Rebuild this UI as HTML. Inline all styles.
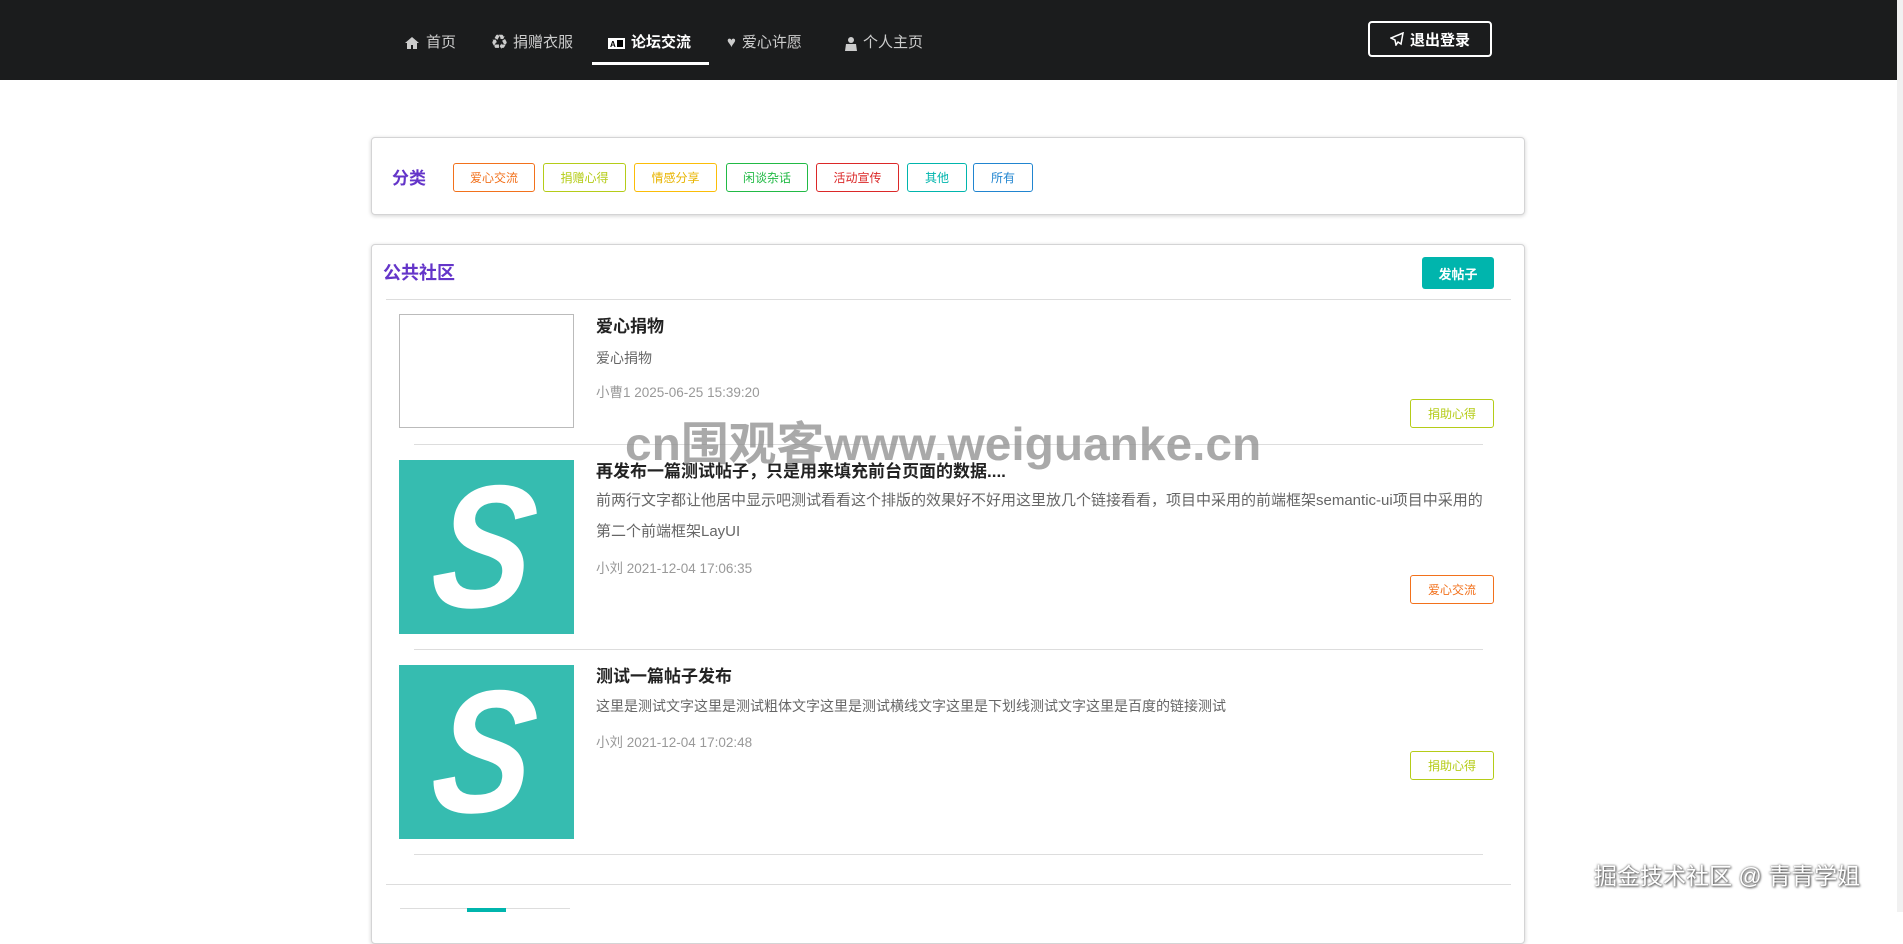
<!DOCTYPE html>
<html><head><meta charset="utf-8"><style>
*{box-sizing:border-box;margin:0;padding:0}
body{width:1903px;height:912px;overflow:hidden;background:#fff;font-family:"Liberation Sans","Noto Sans CJK SC",sans-serif;position:relative}
.hdr{position:absolute;left:0;top:0;width:1897px;height:80px;background:#1b1c1d}
.sb{position:absolute;right:0;top:0;width:6px;height:912px;background:#f1f1f1}
.nav{position:absolute;top:33px;color:#ccc;font-size:15px;line-height:20px;display:flex;align-items:center;gap:6px}
.nav.act{color:#fff;font-weight:bold}
.ul{position:absolute;left:592px;top:62px;width:117px;height:3px;background:#fff}
.logout{position:absolute;left:1368px;top:21px;width:124px;height:36px;border:2px solid #fff;border-radius:4px;color:#fff;font-weight:bold;font-size:15px;display:flex;align-items:center;justify-content:center;gap:6px}
.card{position:absolute;left:371px;width:1154px;background:#fff;border:1px solid #d4d4d5;border-radius:4px;box-shadow:0 1px 4px rgba(0,0,0,.18)}
.tag{position:absolute;top:163px;height:29px;border:1px solid;border-radius:3px;font-size:12px;display:flex;align-items:center;justify-content:center;background:#fff}
.t{position:absolute;font-size:17px;font-weight:bold;color:#222}
.d{position:absolute;font-size:14px;color:#666}
.m{position:absolute;font-size:13.5px;color:#999}
.line{position:absolute;height:1px;background:#ddd}
.img{position:absolute;left:399px;width:175px;height:174px;background:#36bcb0;overflow:hidden}
.img span{position:absolute;left:36px;top:8px;color:#fff;font-size:175px;font-weight:bold;font-style:italic;line-height:160px;transform:scaleX(.85) skewX(-8deg);transform-origin:left}
.btag{position:absolute;left:1410px;width:84px;height:29px;border:1px solid;border-radius:3px;font-size:12px;display:flex;align-items:center;justify-content:center}
</style></head><body>
<div class="hdr"></div>
<div class="sb"></div>
<div class="nav" style="left:404px"><svg width="16" height="14" viewBox="0 0 16 14"><path d="M8 1L1 7h2v6h4V9h2v4h4V7h2z" fill="#ccc"/></svg>首页</div>
<div class="nav" style="left:492px"><span style="font-size:15px">♻</span>捐赠衣服</div>
<div class="nav act" style="left:608px"><svg width="17" height="11"><rect width="17" height="11" fill="#fff"/><text x="2" y="9" font-size="8" fill="#000">A</text><rect x="9" y="2" width="6" height="7" fill="#000"/></svg>论坛交流</div>
<div class="nav" style="left:727px"><span style="font-size:15px">♥</span>爱心许愿</div>
<div class="nav" style="left:845px"><svg width="12" height="15" viewBox="0 0 12 15"><circle cx="6" cy="4" r="3" fill="#ccc"/><path d="M0 15l1-7h10l1 7z" fill="#ccc"/></svg>个人主页</div>
<div class="ul"></div>
<div class="logout"><svg width="14" height="14" viewBox="0 0 14 14"><path d="M13 1L1 6l4 2 1 5 2-3 3 2z" fill="none" stroke="#fff" stroke-width="1.5"/></svg>退出登录</div>

<div class="card" style="top:137px;height:78px"></div>
<div style="position:absolute;left:392px;top:164px;font-size:17px;font-weight:bold;color:#6435c9">分类</div>
<div class="tag" style="left:453px;width:82px;color:#f2711c;border-color:#f2711c">爱心交流</div>
<div class="tag" style="left:543px;width:83px;color:#b5cc18;border-color:#b5cc18">捐赠心得</div>
<div class="tag" style="left:634px;width:83px;color:#e8b400;border-color:#fbbd08">情感分享</div>
<div class="tag" style="left:726px;width:82px;color:#21ba45;border-color:#21ba45">闲谈杂话</div>
<div class="tag" style="left:816px;width:83px;color:#db2828;border-color:#db2828">活动宣传</div>
<div class="tag" style="left:907px;width:60px;color:#00b5ad;border-color:#00b5ad">其他</div>
<div class="tag" style="left:973px;width:60px;color:#2185d0;border-color:#2185d0">所有</div>

<div class="card" style="top:244px;height:700px"></div>
<div style="position:absolute;left:383px;top:259px;font-size:18px;font-weight:bold;color:#6435c9">公共社区</div>
<div style="position:absolute;left:1422px;top:257px;width:72px;height:32px;background:#00b5ad;border-radius:3px;color:#fff;font-size:13px;font-weight:bold;display:flex;align-items:center;justify-content:center">发帖子</div>
<div class="line" style="left:386px;top:299px;width:1125px"></div>

<div style="position:absolute;left:399px;top:314px;width:175px;height:114px;border:1px solid #bbb"></div>
<div class="t" style="left:596px;top:312px">爱心捐物</div>
<div class="d" style="left:596px;top:348px">爱心捐物</div>
<div class="m" style="left:596px;top:381px">小曹1 2025-06-25 15:39:20</div>
<div class="btag" style="top:399px;color:#b5cc18;border-color:#b5cc18">捐助心得</div>
<div class="line" style="left:414px;top:444px;width:1069px"></div>

<div class="img" style="top:460px"><span>S</span></div>
<div class="t" style="left:596px;top:457px">再发布一篇测试帖子，只是用来填充前台页面的数据....</div>
<div class="d" style="left:596px;top:485px;width:895px;line-height:31px;font-size:15px">前两行文字都让他居中显示吧测试看看这个排版的效果好不好用这里放几个链接看看，项目中采用的前端框架semantic-ui项目中采用的第二个前端框架LayUI</div>
<div class="m" style="left:596px;top:557px">小刘 2021-12-04 17:06:35</div>
<div class="btag" style="top:575px;color:#f2711c;border-color:#f2711c">爱心交流</div>
<div class="line" style="left:414px;top:649px;width:1069px"></div>

<div class="img" style="top:665px"><span>S</span></div>
<div class="t" style="left:596px;top:662px">测试一篇帖子发布</div>
<div class="d" style="left:596px;top:696px">这里是测试文字这里是测试粗体文字这里是测试横线文字这里是下划线测试文字这里是百度的链接测试</div>
<div class="m" style="left:596px;top:731px">小刘 2021-12-04 17:02:48</div>
<div class="btag" style="top:751px;color:#b5cc18;border-color:#b5cc18">捐助心得</div>
<div class="line" style="left:414px;top:854px;width:1069px"></div>
<div class="line" style="left:386px;top:884px;width:1125px"></div>
<div style="position:absolute;left:400px;top:908px;width:170px;height:4px;border-top:1px solid #ddd"></div>
<div style="position:absolute;left:467px;top:908px;width:39px;height:4px;background:#00b5ad"></div>

<div style="position:absolute;left:625px;top:408px;font-size:46px;color:rgba(140,140,140,.75);transform:scaleX(1.04);transform-origin:left;white-space:nowrap;font-weight:bold">cn围观客www.weiguanke.cn</div>
<div style="position:absolute;left:1594px;top:857px;font-size:23px;color:#fff;text-shadow:0 0 2px #555,1px 1px 2px #555">掘金技术社区 @ 青青学姐</div>
</body></html>
